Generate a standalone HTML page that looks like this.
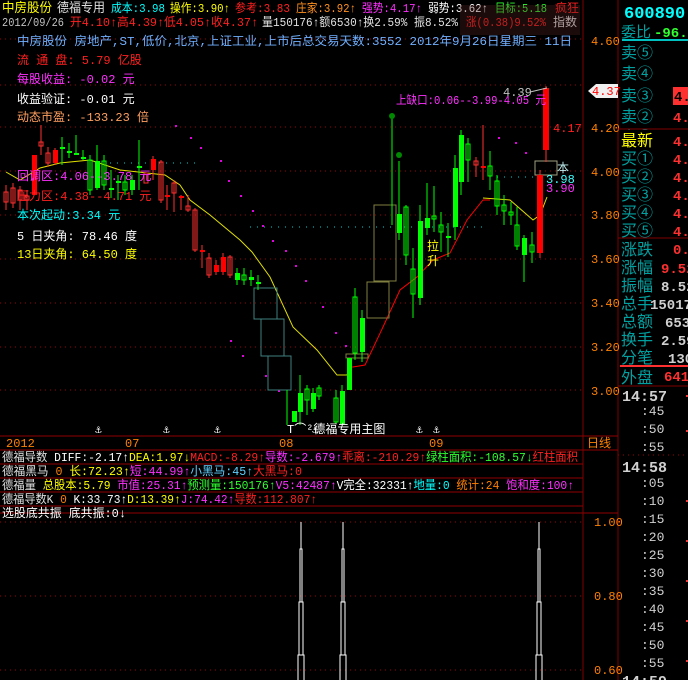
<!DOCTYPE html>
<html><head><meta charset="utf-8">
<style>
html,body{margin:0;padding:0;background:#000;}
svg{display:block;font-size:12px;font-family:"Liberation Mono","WenQuanYi Zen Hei",monospace;}
.c{font-family:"Liberation Mono","WenQuanYi Zen Hei","Noto Sans CJK SC",monospace;}
</style></head><body>
<svg width="688" height="680" viewBox="0 0 688 680" xmlns="http://www.w3.org/2000/svg">
<rect width="688" height="680" fill="#000"/>
<g stroke="#a00000" stroke-width="1" stroke-dasharray="1,4">
<line x1="0" y1="39" x2="583" y2="39"/>
<line x1="0" y1="85" x2="583" y2="85"/>
<line x1="0" y1="127" x2="583" y2="127"/>
<line x1="0" y1="171" x2="583" y2="171"/>
<line x1="0" y1="215" x2="583" y2="215"/>
<line x1="0" y1="259" x2="583" y2="259"/>
<line x1="0" y1="303" x2="583" y2="303"/>
<line x1="0" y1="347" x2="583" y2="347"/>
<line x1="0" y1="390" x2="583" y2="390"/>
<line x1="0" y1="522" x2="583" y2="522"/>
<line x1="0" y1="596" x2="583" y2="596"/>
<line x1="0" y1="670" x2="583" y2="670"/>
<line x1="618" y1="455" x2="688" y2="455"/>
</g>
<g stroke="#00d0d0" stroke-dasharray="1,6">
<line x1="110" y1="163" x2="200" y2="163"/>
<line x1="250" y1="227" x2="485" y2="227"/>
<line x1="497" y1="177" x2="545" y2="177"/>
</g>
<g fill="#e000e0">
<rect x="175" y="125" width="2" height="2"/><rect x="190" y="137" width="2" height="2"/><rect x="200" y="147" width="2" height="2"/><rect x="220" y="160" width="2" height="2"/><rect x="228" y="180" width="2" height="2"/><rect x="240" y="195" width="2" height="2"/><rect x="252" y="210" width="2" height="2"/><rect x="262" y="225" width="2" height="2"/><rect x="272" y="240" width="2" height="2"/><rect x="285" y="250" width="2" height="2"/><rect x="295" y="265" width="2" height="2"/><rect x="305" y="280" width="2" height="2"/><rect x="322" y="306" width="2" height="2"/><rect x="335" y="332" width="2" height="2"/><rect x="345" y="345" width="2" height="2"/><rect x="230" y="340" width="2" height="2"/><rect x="242" y="355" width="2" height="2"/><rect x="265" y="375" width="2" height="2"/><rect x="278" y="390" width="2" height="2"/><rect x="515" y="142" width="2" height="2"/><rect x="525" y="152" width="2" height="2"/><rect x="498" y="137" width="2" height="2"/>
</g>
<polyline fill="none" stroke="#e0e000" stroke-width="1" points="6,172 20,180 40,168 60,163 90,160 120,170 165,175 180,185 190,200 210,215 240,240 252,252 270,277 293,327 317,350 337,375 347,375 350,367"/>
<polyline fill="none" stroke="#e0e000" stroke-width="1" points="483,198 510,200 533,220 540,215 547,197"/>
<polyline fill="none" stroke="#ff0000" stroke-width="1" points="350,367 353,367 365,365 383,327 400,290 417,277 433,260 450,253 467,220 483,200 490,200"/>
<g fill="none" stroke-width="1">
<rect x="254" y="288" width="23" height="31" stroke="#408080"/>
<rect x="261" y="319" width="23" height="37" stroke="#408080"/>
<rect x="268" y="356" width="23" height="34" stroke="#408080"/>
<rect x="346" y="354" width="22" height="4" stroke="#808040"/>
<rect x="367" y="282" width="22" height="36" stroke="#808040"/>
<rect x="374" y="205" width="22" height="76" stroke="#808040"/>
<rect x="535" y="161" width="22" height="14" stroke="#a0a080"/>
</g>
<g stroke="#ff3030" stroke-width="1">
<line x1="6" y1="185" x2="6" y2="210"/><line x1="13" y1="183" x2="13" y2="208"/><line x1="20" y1="186" x2="20" y2="210"/><line x1="27" y1="190" x2="27" y2="210"/>
<line x1="41" y1="125" x2="41" y2="155"/><line x1="48" y1="147" x2="48" y2="167"/><line x1="55" y1="148" x2="55" y2="165"/>
<line x1="153" y1="156" x2="153" y2="180"/><line x1="161" y1="160" x2="161" y2="203"/><line x1="167" y1="185" x2="167" y2="210"/><line x1="174" y1="180" x2="174" y2="212"/><line x1="181" y1="195" x2="181" y2="210"/><line x1="188" y1="195" x2="188" y2="212"/>
<line x1="195" y1="208" x2="195" y2="252"/><line x1="202" y1="245" x2="202" y2="268"/><line x1="209" y1="253" x2="209" y2="278"/><line x1="216" y1="260" x2="216" y2="275"/><line x1="223" y1="253" x2="223" y2="275"/><line x1="230" y1="255" x2="230" y2="278"/>
<line x1="476" y1="157" x2="476" y2="177"/><line x1="483" y1="125" x2="483" y2="180"/><line x1="540" y1="170" x2="540" y2="258"/><line x1="546" y1="86" x2="546" y2="162"/>
</g>
<g fill="none" stroke="#ff3030">
<rect x="4" y="192" width="4" height="10"/><rect x="11" y="188" width="4" height="15"/><rect x="18" y="190" width="4" height="10"/><rect x="25" y="196" width="4" height="4"/>
<rect x="39" y="142" width="4" height="4"/><rect x="46" y="153" width="4" height="10"/>
<rect x="144" y="173" width="4" height="10"/><rect x="159" y="162" width="4" height="38"/><rect x="172" y="183" width="4" height="10"/><rect x="186" y="206" width="4" height="4"/><rect x="193" y="210" width="4" height="40"/><rect x="207" y="258" width="4" height="17"/><rect x="228" y="257" width="4" height="18"/>
<rect x="474" y="161" width="4" height="4"/>
</g>
<g fill="#ff0000">
<rect x="32" y="155" width="5" height="40"/><rect x="53" y="150" width="5" height="13"/><rect x="151" y="159" width="5" height="11"/><rect x="165" y="195" width="5" height="2"/><rect x="179" y="196" width="5" height="2"/><rect x="200" y="250" width="5" height="2"/><rect x="214" y="265" width="5" height="7"/><rect x="221" y="257" width="5" height="15"/><rect x="481" y="166" width="5" height="2"/>
<rect x="537" y="175" width="6" height="78"/><rect x="543" y="88" width="6" height="62"/>
</g>
<g stroke="#00ff00" stroke-width="1">
<line x1="62" y1="137" x2="62" y2="165"/><line x1="69" y1="143" x2="69" y2="158"/><line x1="76" y1="135" x2="76" y2="155"/><line x1="83" y1="150" x2="83" y2="160"/>
<line x1="90" y1="155" x2="90" y2="195"/><line x1="97" y1="145" x2="97" y2="190"/><line x1="104" y1="155" x2="104" y2="190"/><line x1="111" y1="170" x2="111" y2="198"/><line x1="118" y1="175" x2="118" y2="200"/><line x1="125" y1="175" x2="125" y2="195"/><line x1="132" y1="175" x2="132" y2="195"/><line x1="139" y1="140" x2="139" y2="190"/>
<line x1="237" y1="268" x2="237" y2="285"/><line x1="244" y1="268" x2="244" y2="285"/><line x1="251" y1="270" x2="251" y2="286"/><line x1="258" y1="275" x2="258" y2="290"/>
<line x1="287" y1="390" x2="287" y2="425"/><line x1="300" y1="375" x2="300" y2="425"/><line x1="307" y1="385" x2="307" y2="415"/><line x1="313" y1="388" x2="313" y2="412"/><line x1="319" y1="385" x2="319" y2="400"/><line x1="336" y1="390" x2="336" y2="424"/><line x1="342" y1="385" x2="342" y2="424"/>
<line x1="355" y1="288" x2="355" y2="360"/><line x1="362" y1="310" x2="362" y2="362"/>
<line x1="392" y1="118" x2="392" y2="225"/><line x1="399" y1="161" x2="399" y2="240"/><line x1="406" y1="205" x2="406" y2="265"/><line x1="413" y1="248" x2="413" y2="318"/><line x1="420" y1="205" x2="420" y2="305"/><line x1="427" y1="183" x2="427" y2="235"/><line x1="434" y1="186" x2="434" y2="232"/><line x1="441" y1="212" x2="441" y2="252"/><line x1="448" y1="223" x2="448" y2="257"/><line x1="455" y1="155" x2="455" y2="240"/><line x1="461" y1="130" x2="461" y2="195"/><line x1="468" y1="138" x2="468" y2="182"/>
<line x1="490" y1="151" x2="490" y2="190"/><line x1="497" y1="175" x2="497" y2="215"/><line x1="504" y1="195" x2="504" y2="225"/><line x1="511" y1="202" x2="511" y2="225"/><line x1="517" y1="207" x2="517" y2="250"/><line x1="524" y1="235" x2="524" y2="282"/><line x1="532" y1="232" x2="532" y2="263"/>
</g>
<g fill="#00ff00">
<rect x="60" y="147" width="5" height="2"/><rect x="67" y="151" width="5" height="2"/><rect x="74" y="153" width="5" height="2"/><rect x="81" y="157" width="5" height="2"/><rect x="95" y="161" width="5" height="27"/><rect x="109" y="188" width="5" height="2"/><rect x="116" y="181" width="5" height="2"/><rect x="130" y="180" width="5" height="10"/><rect x="137" y="166" width="5" height="2"/>
<rect x="235" y="273" width="5" height="7"/><rect x="249" y="277" width="5" height="3"/><rect x="256" y="282" width="5" height="2"/>
<rect x="292" y="411" width="5" height="11"/><rect x="298" y="393" width="5" height="19"/><rect x="311" y="393" width="5" height="16"/><rect x="340" y="391" width="5" height="33"/><rect x="347" y="358" width="5" height="32"/><rect x="360" y="318" width="5" height="34"/>
<rect x="397" y="214" width="5" height="19"/><rect x="418" y="221" width="5" height="77"/><rect x="425" y="218" width="5" height="10"/><rect x="446" y="236" width="5" height="2"/><rect x="453" y="168" width="5" height="59"/><rect x="459" y="135" width="5" height="47"/><rect x="522" y="238" width="5" height="17"/>
</g>
<g fill="none" stroke="#00ff00">
<rect x="88" y="160" width="4" height="30"/><rect x="102" y="161" width="4" height="24"/><rect x="123" y="182" width="4" height="8"/>
<rect x="242" y="275" width="4" height="5"/><rect x="305" y="389" width="4" height="11"/><rect x="317" y="388" width="4" height="8"/><rect x="334" y="398" width="4" height="24"/><rect x="353" y="297" width="4" height="56"/>
<rect x="404" y="207" width="4" height="48"/><rect x="411" y="269" width="4" height="25"/><rect x="432" y="216" width="4" height="3"/><rect x="439" y="225" width="4" height="7"/><rect x="466" y="144" width="4" height="16"/>
<rect x="488" y="166" width="4" height="10"/><rect x="495" y="181" width="4" height="25"/><rect x="502" y="205" width="4" height="6"/><rect x="509" y="212" width="4" height="3"/><rect x="515" y="225" width="4" height="21"/><rect x="530" y="245" width="4" height="7"/>
</g>
<circle cx="392" cy="116" r="3" fill="#008800"/><circle cx="399" cy="155" r="3" fill="#008800"/>
<text class="c" x="2" y="12" fill="#ffff00" font-size="13" textLength="50" lengthAdjust="spacingAndGlyphs">中房股份</text>
<text class="c" x="57" y="12" fill="#e0e0e0" font-size="13" textLength="48" lengthAdjust="spacingAndGlyphs">德福专用</text>
<text class="c" x="111" y="12" fill="#00ffff" textLength="54" lengthAdjust="spacingAndGlyphs">成本:3.98</text>
<text class="c" x="170" y="12" fill="#ffff00" textLength="60" lengthAdjust="spacingAndGlyphs">操作:3.90↑</text>
<text class="c" x="235" y="12" fill="#ff2020" textLength="55" lengthAdjust="spacingAndGlyphs">参考:3.83</text>
<text class="c" x="296" y="12" fill="#ff9020" textLength="60" lengthAdjust="spacingAndGlyphs">庄家:3.92↑</text>
<text class="c" x="362" y="12" fill="#ff30ff" textLength="60" lengthAdjust="spacingAndGlyphs">强势:4.17↑</text>
<text class="c" x="428" y="12" fill="#ffffff" textLength="60" lengthAdjust="spacingAndGlyphs">弱势:3.62↑</text>
<text class="c" x="495" y="12" fill="#30ff30" textLength="52" lengthAdjust="spacingAndGlyphs">目标:5.18</text>
<text class="c" x="555" y="12" fill="#ff2020">疯狂</text>
<text class="c" x="2" y="26" fill="#c0c0c0" textLength="62" lengthAdjust="spacingAndGlyphs">2012/09/26</text>
<text class="c" x="70" y="26" fill="#ff2020" textLength="188" lengthAdjust="spacingAndGlyphs">开4.10↑高4.39↑低4.05↑收4.37↑</text>
<text class="c" x="262" y="26" fill="#e0e0e0" textLength="196" lengthAdjust="spacingAndGlyphs">量150176↑额6530↑换2.59% 振8.52%</text>
<text class="c" x="466" y="26" fill="#ff2020" textLength="80" lengthAdjust="spacingAndGlyphs">涨(0.38)9.52%</text>
<text class="c" x="553" y="26" fill="#e0e0e0">指数</text>
<rect x="460" y="5" width="120" height="30" fill="#502020" opacity="0.35"/>
<text class="c" x="17" y="45" fill="#70b0ff" textLength="555" lengthAdjust="spacingAndGlyphs">中房股份 房地产,ST,低价,北京,上证工业,上市后总交易天数:3552 2012年9月26日星期三 11日</text>
<text class="c" x="17" y="64" fill="#ff2020">流  通  盘: 5.79 亿股</text>
<text class="c" x="17" y="83" fill="#ff30ff">每股收益:  -0.02  元</text>
<text class="c" x="17" y="103" fill="#ffffff">收益验证:  -0.01  元</text>
<text class="c" x="17" y="121" fill="#ffa060">动态市盈:  -133.23 倍</text>
<text class="c" x="17" y="180" fill="#ff30ff">回调区:4.06--3.78 元</text>
<text class="c" x="17" y="200" fill="#ff2020">压力区:4.38--4.71 元</text>
<text class="c" x="17" y="219" fill="#00ffff">本次起动:3.34 元</text>
<text class="c" x="17" y="240" fill="#ffffff">5 日夹角: 78.46 度</text>
<text class="c" x="17" y="258" fill="#ffff00">13日夹角: 64.50 度</text>
<text class="c" x="396" y="104" fill="#ff30ff" textLength="150" lengthAdjust="spacingAndGlyphs">上缺口:0.06--3.99-4.05 元</text>
<text x="503" y="96" fill="#c0c0c0">4.39</text>
<line x1="530" y1="92" x2="547" y2="88" stroke="#c0c0c0"/>
<text x="553" y="132" fill="#ff2020">4.17</text>
<text class="c" x="557" y="172" fill="#c0f0f0">本</text>
<text x="546" y="183" fill="#40ffff">3.98</text>
<text x="546" y="192" fill="#ff30ff">3.90</text>
<text class="c" x="427" y="250" fill="#ffff00">拉</text>
<text class="c" x="427" y="265" fill="#ffff00">升</text>
<text class="c" x="287" y="433" fill="#ffffff">T⌒²德福专用主图</text>
<g fill="#ffffff" font-size="11"><text x="95" y="433">⚓</text><text x="163" y="433">⚓</text><text x="214" y="433">⚓</text><text x="312" y="433">⚓</text><text x="416" y="433">⚓</text><text x="433" y="433">⚓</text></g>
<line x1="583" y1="0" x2="583" y2="680" stroke="#800000"/>
<line x1="618" y1="0" x2="618" y2="680" stroke="#800000"/>
<g fill="#ff8000" font-size="12">
<text x="591" y="45">4.60</text><text x="591" y="132">4.20</text><text x="591" y="176">4.00</text><text x="591" y="219">3.80</text><text x="591" y="263">3.60</text><text x="591" y="307">3.40</text><text x="591" y="351">3.20</text><text x="591" y="395">3.00</text>
<text x="594" y="526">1.00</text><text x="594" y="600">0.80</text><text x="594" y="674">0.60</text>
</g>
<path d="M588,91 L596,84 L618,84 L618,98 L596,98 Z" fill="#f0f0f0"/>
<text x="592" y="95" fill="#ff0000" font-size="12">4.37</text>
<line x1="0" y1="436" x2="618" y2="436" stroke="#900000"/>
<line x1="0" y1="450" x2="618" y2="450" stroke="#900000"/>
<g fill="#ff8000" font-size="12"><text x="6" y="447">2012</text><text x="125" y="447">07</text><text x="279" y="447">08</text><text x="429" y="447">09</text></g>
<text class="c" x="587" y="447" fill="#ff8000">日线</text>
<g stroke="#900000"><line x1="0" y1="464" x2="583" y2="464"/><line x1="0" y1="478" x2="583" y2="478"/><line x1="0" y1="492" x2="583" y2="492"/><line x1="0" y1="506" x2="583" y2="506"/><line x1="0" y1="513" x2="618" y2="513"/></g>
<g font-size="12">
<text class="c" x="2" y="461" fill="#e0e0e0" textLength="576" lengthAdjust="spacingAndGlyphs">德福导数 <tspan fill="#ffffff">DIFF:-2.17↑</tspan><tspan fill="#ffff00">DEA:1.97↓</tspan><tspan fill="#ff2020">MACD:-8.29↑</tspan><tspan fill="#ff30ff">导数:-2.679↑</tspan><tspan fill="#ff2020">乖离:-210.29↑</tspan><tspan fill="#30ff30">绿柱面积:-108.57↓</tspan><tspan fill="#ff2020">红柱面积</tspan></text>
<text class="c" x="2" y="475" fill="#e0e0e0" textLength="300" lengthAdjust="spacingAndGlyphs">德福黑马 <tspan fill="#ff8000">0 </tspan><tspan fill="#ffff00">长:72.23↑</tspan><tspan fill="#ff30ff">短:44.99↑</tspan><tspan fill="#60d0ff">小黑马:45↑</tspan><tspan fill="#ff2020">大黑马:0</tspan></text>
<text class="c" x="2" y="489" fill="#e0e0e0" textLength="572" lengthAdjust="spacingAndGlyphs">德福量 <tspan fill="#ffff00">总股本:5.79 </tspan><tspan fill="#ff30ff">市值:25.31↑</tspan><tspan fill="#30ff30">预测量:150176↑</tspan><tspan fill="#ff30ff">V5:42487↑</tspan><tspan fill="#ffffff">V完全:32331↑</tspan><tspan fill="#00ffff">地量:0 </tspan><tspan fill="#ff8000">统计:24 </tspan><tspan fill="#ff30ff">饱和度:100↑</tspan></text>
<text class="c" x="2" y="503" fill="#e0e0e0" textLength="315" lengthAdjust="spacingAndGlyphs">德福导数K <tspan fill="#ff8000">0 </tspan><tspan fill="#ffffff">K:33.73↑</tspan><tspan fill="#ffff00">D:13.39↑</tspan><tspan fill="#ff30ff">J:74.42↑</tspan><tspan fill="#ff2020">导数:112.807↑</tspan></text>
<text class="c" x="2" y="517" fill="#ffffff" textLength="124" lengthAdjust="spacingAndGlyphs">选股底共振 底共振:0↓</text>
</g>
<g stroke="#ffffff" fill="none">
<line x1="301" y1="522" x2="301" y2="549"/><rect x="300" y="549" width="2" height="53"/><rect x="299" y="602" width="4" height="53"/><rect x="298" y="655" width="6" height="30"/>
<line x1="343" y1="522" x2="343" y2="549"/><rect x="342" y="549" width="2" height="53"/><rect x="341" y="602" width="4" height="53"/><rect x="340" y="655" width="6" height="30"/>
<line x1="539" y1="522" x2="539" y2="549"/><rect x="538" y="549" width="2" height="53"/><rect x="537" y="602" width="4" height="53"/><rect x="536" y="655" width="6" height="30"/>
</g>
<text x="624" y="18" fill="#00ffff" font-size="17" font-weight="bold">600890</text>
<text class="c" x="621" y="37" fill="#00a0a0" font-size="15">委比</text>
<text x="654" y="37" fill="#30ff30" font-size="14" font-weight="bold">-96.71</text>
<line x1="622" y1="40" x2="688" y2="40" stroke="#00c0c0" stroke-width="2"/>
<g fill="#00a0a0" font-size="16">
<text class="c" x="621" y="58">卖⑤</text><text class="c" x="621" y="79">卖④</text><text class="c" x="621" y="101">卖③</text><text class="c" x="621" y="122">卖②</text><text class="c" x="621" y="143">卖①</text>
<text class="c" x="621" y="164">买①</text><text class="c" x="621" y="182">买②</text><text class="c" x="621" y="200">买③</text><text class="c" x="621" y="218">买④</text><text class="c" x="621" y="236">买⑤</text>
<text class="c" x="621" y="255">涨跌</text><text class="c" x="621" y="273">涨幅</text><text class="c" x="621" y="291">振幅</text><text class="c" x="621" y="309">总手</text><text class="c" x="621" y="327">总额</text><text class="c" x="621" y="345">换手</text><text class="c" x="621" y="363">分笔</text><text class="c" x="621" y="383">外盘</text>
</g>
<line x1="618" y1="129" x2="688" y2="129" stroke="#800000"/>
<rect x="619" y="130" width="69" height="17" fill="#000"/>
<text class="c" x="621" y="146" fill="#ffff00" font-size="16">最新</text>
<g fill="#ff3030" font-size="14" font-weight="bold"><text x="673" y="146">4.3</text><text x="673" y="164">4.3</text><text x="673" y="182">4.3</text><text x="673" y="200">4.3</text><text x="673" y="218">4.3</text><text x="673" y="236">4.3</text>
<text x="673" y="122">4.3</text><text x="673" y="254">0.3</text><text x="661" y="273">9.52</text><text x="664" y="381">6417</text></g>
<rect x="673" y="87" width="15" height="18" fill="#ff3030"/><text x="674" y="101" fill="#000" font-size="14" font-weight="bold">4.</text>
<g fill="#d0d0d0" font-size="14" font-weight="bold"><text x="661" y="291">8.52</text><text x="650" y="309">15017</text><text x="665" y="327">653</text><text x="661" y="345">2.59</text><text x="668" y="363">130</text></g>
<line x1="618" y1="238" x2="688" y2="238" stroke="#800000"/>
<line x1="620" y1="366" x2="688" y2="366" stroke="#ff3030" stroke-width="2"/>
<line x1="618" y1="386" x2="688" y2="386" stroke="#800000"/>
<g fill="#d0d0d0" font-size="13"><text x="622" y="401" font-weight="bold" font-size="15">14:57</text><text x="641" y="415">:45</text><text x="641" y="433">:50</text><text x="641" y="451">:55</text><text x="622" y="472" font-weight="bold" font-size="15">14:58</text><text x="641" y="487">:05</text><text x="641" y="505">:10</text><text x="641" y="523">:15</text><text x="641" y="541">:20</text><text x="641" y="559">:25</text><text x="641" y="577">:30</text><text x="641" y="595">:35</text><text x="641" y="613">:40</text><text x="641" y="631">:45</text><text x="641" y="649">:50</text><text x="641" y="667">:55</text><text x="622" y="686" font-weight="bold" font-size="15">14:59</text></g>
<g fill="#ff3030"><rect x="686" y="395" width="2" height="2"/><rect x="686" y="430" width="2" height="2"/><rect x="686" y="500" width="2" height="2"/><rect x="686" y="540" width="2" height="2"/><rect x="686" y="580" width="2" height="2"/><rect x="686" y="620" width="2" height="2"/><rect x="686" y="660" width="2" height="2"/></g>
</svg>
</body></html>
